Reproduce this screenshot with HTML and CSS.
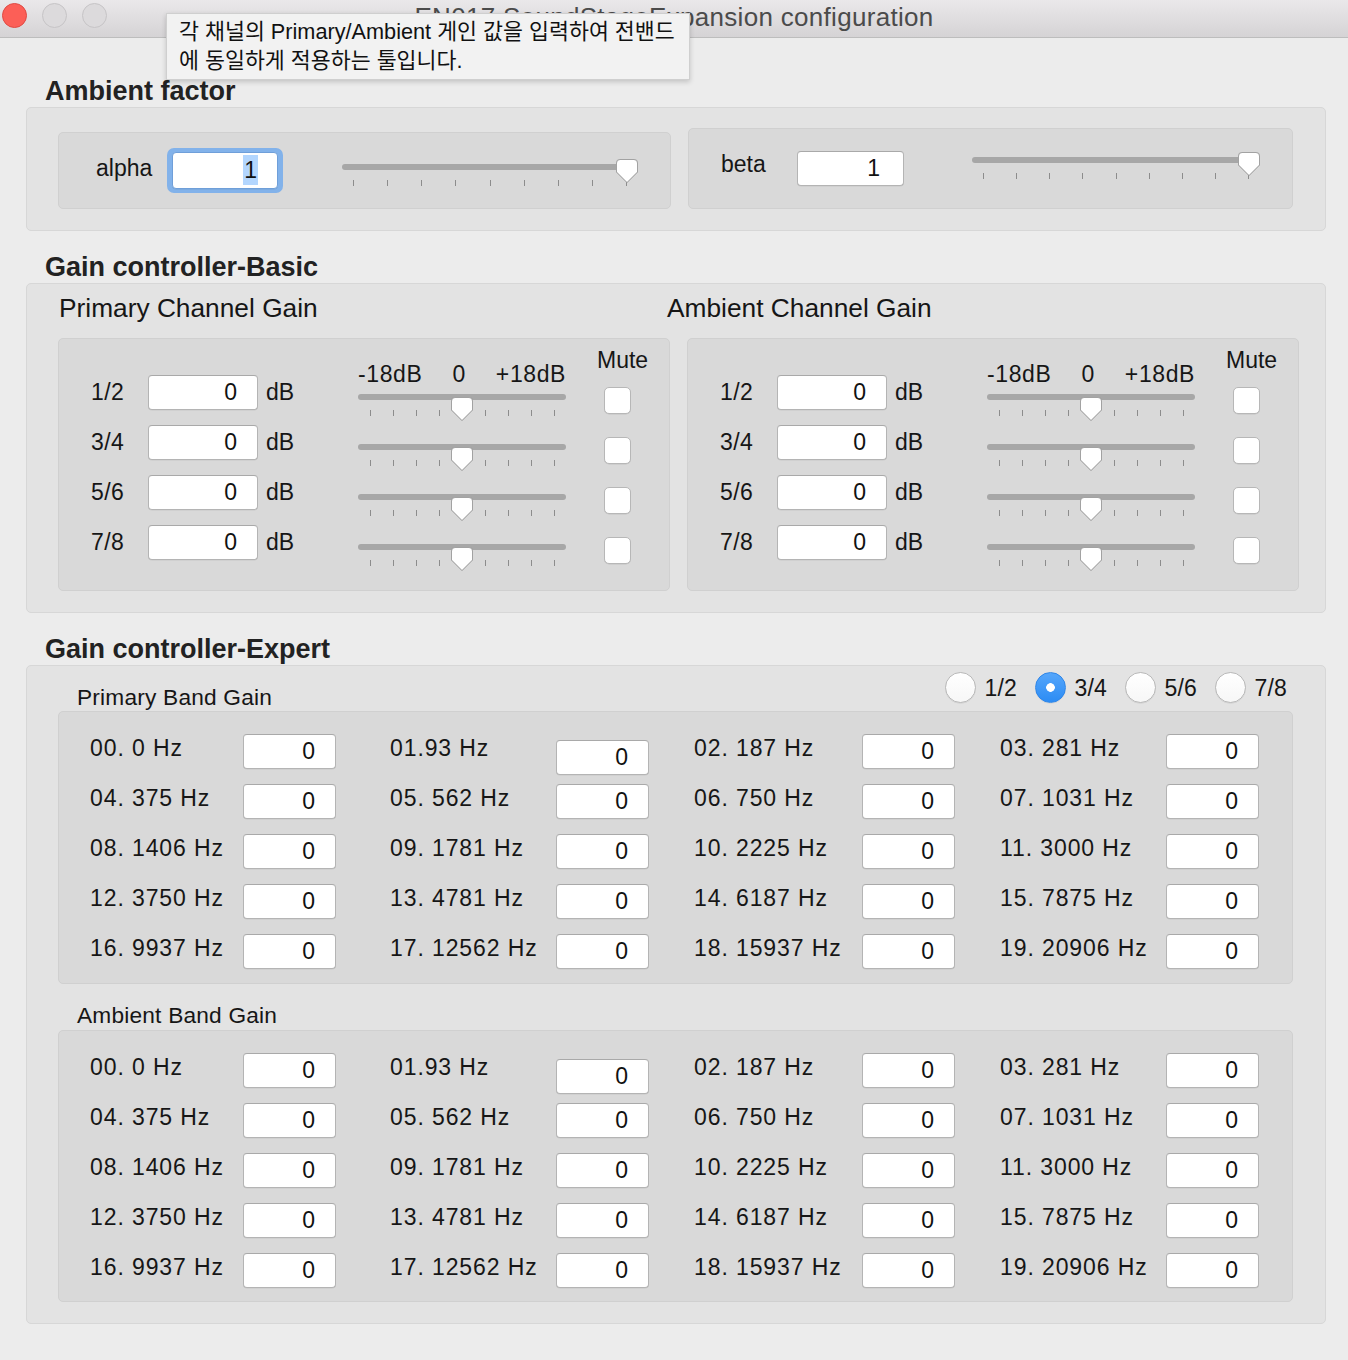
FILE: index.html
```html
<!DOCTYPE html>
<html lang="ko">
<head>
<meta charset="utf-8">
<title>EN017 SoundStageExpansion configuration</title>
<link rel="stylesheet" href="styles.css">
</head>
<body>
<div class="window">
  <header class="titlebar">
    <div class="lights">
      <span class="light close"></span>
      <span class="light"></span>
      <span class="light"></span>
    </div>
    <div class="title">EN017 SoundStageExpansion configuration</div>
    <div></div>
  </header>

  <main class="content">
    <h2 class="section-title">Ambient factor</h2>
    <section class="group group-factor">
      <div class="panel factor-panel alpha-panel">
        <span class="factor-label alpha-label">alpha</span>
        <div class="focus-ring"><div class="field field-alpha"><span class="sel">1</span></div></div>
        <div class="slider slider-alpha">
          <div class="track"></div>
          <div class="ticks"><i></i><i></i><i></i><i></i><i></i><i></i><i></i><i></i><i></i></div>
          <svg class="thumb" style="left:274px" width="22" height="24" viewBox="0 0 22 24"><path d="M4 0.5H18A3.5 3.5 0 0 1 21.5 4V13L11 23.5L0.5 13V4A3.5 3.5 0 0 1 4 0.5Z"/></svg>
        </div>
      </div>
      <div class="panel factor-panel beta-panel">
        <span class="factor-label beta-label">beta</span>
        <div class="field field-beta">1</div>
        <div class="slider slider-beta">
          <div class="track"></div>
          <div class="ticks"><i></i><i></i><i></i><i></i><i></i><i></i><i></i><i></i><i></i></div>
          <svg class="thumb" style="left:266px" width="22" height="24" viewBox="0 0 22 24"><path d="M4 0.5H18A3.5 3.5 0 0 1 21.5 4V13L11 23.5L0.5 13V4A3.5 3.5 0 0 1 4 0.5Z"/></svg>
        </div>
      </div>
    </section>

    <h2 class="section-title">Gain controller-Basic</h2>
    <section class="group group-basic">
      <div class="channel-heads">
        <span class="channel-title">Primary Channel Gain</span>
        <span class="channel-title">Ambient Channel Gain</span>
      </div>
      <div class="channel-panels">
        <div class="panel gain-panel">
          <div class="gain-rows">
            <div class="gain-row"><span class="ch">1/2</span><div class="field field-db">0</div><span class="unit">dB</span></div>
            <div class="gain-row"><span class="ch">3/4</span><div class="field field-db">0</div><span class="unit">dB</span></div>
            <div class="gain-row"><span class="ch">5/6</span><div class="field field-db">0</div><span class="unit">dB</span></div>
            <div class="gain-row"><span class="ch">7/8</span><div class="field field-db">0</div><span class="unit">dB</span></div>
          </div>
          <div class="gain-sliders">
            <div class="scale"><span>-18dB</span><span>0</span><span>+18dB</span></div>
            <div class="slider slider-gain"><div class="track"></div><div class="ticks"><i></i><i></i><i></i><i></i><i></i><i></i><i></i><i></i><i></i></div><svg class="thumb" style="left:93px" width="22" height="24" viewBox="0 0 22 24"><path d="M4 0.5H18A3.5 3.5 0 0 1 21.5 4V13L11 23.5L0.5 13V4A3.5 3.5 0 0 1 4 0.5Z"/></svg></div>
            <div class="slider slider-gain"><div class="track"></div><div class="ticks"><i></i><i></i><i></i><i></i><i></i><i></i><i></i><i></i><i></i></div><svg class="thumb" style="left:93px" width="22" height="24" viewBox="0 0 22 24"><path d="M4 0.5H18A3.5 3.5 0 0 1 21.5 4V13L11 23.5L0.5 13V4A3.5 3.5 0 0 1 4 0.5Z"/></svg></div>
            <div class="slider slider-gain"><div class="track"></div><div class="ticks"><i></i><i></i><i></i><i></i><i></i><i></i><i></i><i></i><i></i></div><svg class="thumb" style="left:93px" width="22" height="24" viewBox="0 0 22 24"><path d="M4 0.5H18A3.5 3.5 0 0 1 21.5 4V13L11 23.5L0.5 13V4A3.5 3.5 0 0 1 4 0.5Z"/></svg></div>
            <div class="slider slider-gain"><div class="track"></div><div class="ticks"><i></i><i></i><i></i><i></i><i></i><i></i><i></i><i></i><i></i></div><svg class="thumb" style="left:93px" width="22" height="24" viewBox="0 0 22 24"><path d="M4 0.5H18A3.5 3.5 0 0 1 21.5 4V13L11 23.5L0.5 13V4A3.5 3.5 0 0 1 4 0.5Z"/></svg></div>
          </div>
          <div class="mute-col">
            <div class="mute-label">Mute</div>
            <span class="checkbox"></span><span class="checkbox"></span><span class="checkbox"></span><span class="checkbox"></span>
          </div>
        </div>

        <div class="panel gain-panel">
          <div class="gain-rows">
            <div class="gain-row"><span class="ch">1/2</span><div class="field field-db">0</div><span class="unit">dB</span></div>
            <div class="gain-row"><span class="ch">3/4</span><div class="field field-db">0</div><span class="unit">dB</span></div>
            <div class="gain-row"><span class="ch">5/6</span><div class="field field-db">0</div><span class="unit">dB</span></div>
            <div class="gain-row"><span class="ch">7/8</span><div class="field field-db">0</div><span class="unit">dB</span></div>
          </div>
          <div class="gain-sliders">
            <div class="scale"><span>-18dB</span><span>0</span><span>+18dB</span></div>
            <div class="slider slider-gain"><div class="track"></div><div class="ticks"><i></i><i></i><i></i><i></i><i></i><i></i><i></i><i></i><i></i></div><svg class="thumb" style="left:93px" width="22" height="24" viewBox="0 0 22 24"><path d="M4 0.5H18A3.5 3.5 0 0 1 21.5 4V13L11 23.5L0.5 13V4A3.5 3.5 0 0 1 4 0.5Z"/></svg></div>
            <div class="slider slider-gain"><div class="track"></div><div class="ticks"><i></i><i></i><i></i><i></i><i></i><i></i><i></i><i></i><i></i></div><svg class="thumb" style="left:93px" width="22" height="24" viewBox="0 0 22 24"><path d="M4 0.5H18A3.5 3.5 0 0 1 21.5 4V13L11 23.5L0.5 13V4A3.5 3.5 0 0 1 4 0.5Z"/></svg></div>
            <div class="slider slider-gain"><div class="track"></div><div class="ticks"><i></i><i></i><i></i><i></i><i></i><i></i><i></i><i></i><i></i></div><svg class="thumb" style="left:93px" width="22" height="24" viewBox="0 0 22 24"><path d="M4 0.5H18A3.5 3.5 0 0 1 21.5 4V13L11 23.5L0.5 13V4A3.5 3.5 0 0 1 4 0.5Z"/></svg></div>
            <div class="slider slider-gain"><div class="track"></div><div class="ticks"><i></i><i></i><i></i><i></i><i></i><i></i><i></i><i></i><i></i></div><svg class="thumb" style="left:93px" width="22" height="24" viewBox="0 0 22 24"><path d="M4 0.5H18A3.5 3.5 0 0 1 21.5 4V13L11 23.5L0.5 13V4A3.5 3.5 0 0 1 4 0.5Z"/></svg></div>
          </div>
          <div class="mute-col">
            <div class="mute-label">Mute</div>
            <span class="checkbox"></span><span class="checkbox"></span><span class="checkbox"></span><span class="checkbox"></span>
          </div>
        </div>
      </div>
    </section>

    <h2 class="section-title">Gain controller-Expert</h2>
    <section class="group group-expert">
      <div class="expert-head">
        <span class="band-title">Primary Band Gain</span>
        <div class="radios">
          <label class="radio"><span class="radio-dot"></span>1/2</label>
          <label class="radio"><span class="radio-dot on"></span>3/4</label>
          <label class="radio"><span class="radio-dot"></span>5/6</label>
          <label class="radio"><span class="radio-dot"></span>7/8</label>
        </div>
      </div>
      <div class="panel band-panel">
        <div class="band-cell"><span class="band-label">00. 0 Hz</span><div class="field field-band">0</div></div>
        <div class="band-cell"><span class="band-label">01.93 Hz</span><div class="field field-band low">0</div></div>
        <div class="band-cell"><span class="band-label">02. 187 Hz</span><div class="field field-band">0</div></div>
        <div class="band-cell"><span class="band-label">03. 281 Hz</span><div class="field field-band">0</div></div>
        <div class="band-cell"><span class="band-label">04. 375 Hz</span><div class="field field-band">0</div></div>
        <div class="band-cell"><span class="band-label">05. 562 Hz</span><div class="field field-band">0</div></div>
        <div class="band-cell"><span class="band-label">06. 750 Hz</span><div class="field field-band">0</div></div>
        <div class="band-cell"><span class="band-label">07. 1031 Hz</span><div class="field field-band">0</div></div>
        <div class="band-cell"><span class="band-label">08. 1406 Hz</span><div class="field field-band">0</div></div>
        <div class="band-cell"><span class="band-label">09. 1781 Hz</span><div class="field field-band">0</div></div>
        <div class="band-cell"><span class="band-label">10. 2225 Hz</span><div class="field field-band">0</div></div>
        <div class="band-cell"><span class="band-label">11. 3000 Hz</span><div class="field field-band">0</div></div>
        <div class="band-cell"><span class="band-label">12. 3750 Hz</span><div class="field field-band">0</div></div>
        <div class="band-cell"><span class="band-label">13. 4781 Hz</span><div class="field field-band">0</div></div>
        <div class="band-cell"><span class="band-label">14. 6187 Hz</span><div class="field field-band">0</div></div>
        <div class="band-cell"><span class="band-label">15. 7875 Hz</span><div class="field field-band">0</div></div>
        <div class="band-cell"><span class="band-label">16. 9937 Hz</span><div class="field field-band">0</div></div>
        <div class="band-cell"><span class="band-label">17. 12562 Hz</span><div class="field field-band">0</div></div>
        <div class="band-cell"><span class="band-label">18. 15937 Hz</span><div class="field field-band">0</div></div>
        <div class="band-cell"><span class="band-label">19. 20906 Hz</span><div class="field field-band">0</div></div>
      </div>
      <div class="expert-head ambient-head">
        <span class="band-title">Ambient Band Gain</span>
      </div>
      <div class="panel band-panel">
        <div class="band-cell"><span class="band-label">00. 0 Hz</span><div class="field field-band">0</div></div>
        <div class="band-cell"><span class="band-label">01.93 Hz</span><div class="field field-band low">0</div></div>
        <div class="band-cell"><span class="band-label">02. 187 Hz</span><div class="field field-band">0</div></div>
        <div class="band-cell"><span class="band-label">03. 281 Hz</span><div class="field field-band">0</div></div>
        <div class="band-cell"><span class="band-label">04. 375 Hz</span><div class="field field-band">0</div></div>
        <div class="band-cell"><span class="band-label">05. 562 Hz</span><div class="field field-band">0</div></div>
        <div class="band-cell"><span class="band-label">06. 750 Hz</span><div class="field field-band">0</div></div>
        <div class="band-cell"><span class="band-label">07. 1031 Hz</span><div class="field field-band">0</div></div>
        <div class="band-cell"><span class="band-label">08. 1406 Hz</span><div class="field field-band">0</div></div>
        <div class="band-cell"><span class="band-label">09. 1781 Hz</span><div class="field field-band">0</div></div>
        <div class="band-cell"><span class="band-label">10. 2225 Hz</span><div class="field field-band">0</div></div>
        <div class="band-cell"><span class="band-label">11. 3000 Hz</span><div class="field field-band">0</div></div>
        <div class="band-cell"><span class="band-label">12. 3750 Hz</span><div class="field field-band">0</div></div>
        <div class="band-cell"><span class="band-label">13. 4781 Hz</span><div class="field field-band">0</div></div>
        <div class="band-cell"><span class="band-label">14. 6187 Hz</span><div class="field field-band">0</div></div>
        <div class="band-cell"><span class="band-label">15. 7875 Hz</span><div class="field field-band">0</div></div>
        <div class="band-cell"><span class="band-label">16. 9937 Hz</span><div class="field field-band">0</div></div>
        <div class="band-cell"><span class="band-label">17. 12562 Hz</span><div class="field field-band">0</div></div>
        <div class="band-cell"><span class="band-label">18. 15937 Hz</span><div class="field field-band">0</div></div>
        <div class="band-cell"><span class="band-label">19. 20906 Hz</span><div class="field field-band">0</div></div>
      </div>
    </section>
  </main>

  <div class="tooltip">각 채널의 Primary/Ambient 게인 값을 입력하여 전밴드<br>에 동일하게 적용하는 툴입니다.</div>
</div>
</body>
</html>
```

FILE: styles.css
```css
* { box-sizing: border-box; margin: 0; padding: 0; }

html, body { width: 1348px; height: 1360px; overflow: hidden; }

body {
  background: #ececec;
  font-family: "Liberation Sans", Arial, "Noto Sans CJK KR", sans-serif;
  font-size: 23px;
  color: #161616;
}

.window { position: relative; width: 1348px; height: 1360px; background: #ececec; }

/* ---------- title bar ---------- */
.titlebar {
  height: 38px;
  border-bottom: 1px solid #bdbdbd;
  background: linear-gradient(#eae8ea, #d5d3d5);
  display: grid;
  grid-template-columns: 1fr auto 1fr;
  align-items: start;
}
.lights { display: flex; gap: 15px; padding: 3px 0 0 2px; }
.light {
  width: 25px; height: 25px; border-radius: 50%;
  background: #dcdadc; border: 1px solid #c6c4c6;
}
.light.close { background: #fc5f57; border-color: #df4a43; }
.title {
  font-size: 26px; line-height: 30px; color: #4b4b4b;
  padding-top: 2px; letter-spacing: 0.3px;
}

/* ---------- content ---------- */
.content { padding: 0 22px 0 26px; }

.section-title {
  font-size: 27px; font-weight: bold; line-height: 30px; color: #222;
  margin: 21px 0 1px 19px;
}
.section-title:first-child { margin-top: 38px; }

.group {
  width: 1300px;
  background: #e3e3e3;
  border: 1px solid #d7d7d7;
  border-radius: 5px;
}

.panel {
  background: #d9d9d9;
  border: 1px solid #d0d0d0;
  border-radius: 5px;
}

.field {
  background: #fff;
  border: 1px solid #b4b4b4;
  border-top-color: #a9a9a9;
  border-radius: 4px;
  text-align: right;
  padding-right: 20px;
  font-size: 23px;
  color: #111;
  box-shadow: 0 0.5px 0.5px rgba(0,0,0,0.08);
}

/* ---------- slider ---------- */
.slider { position: relative; height: 30px; }
.slider .track {
  margin-top: 8px; height: 6px; border-radius: 3px; background: #a7a7a7;
}
.slider .ticks {
  display: flex; justify-content: space-between;
  margin-top: 10px; padding: 0 11px;
}
.slider .ticks i { display: block; width: 1px; height: 6px; background: #8c8c8c; }
.slider .thumb {
  position: absolute; top: 3px;
  filter: drop-shadow(0 0.5px 0.6px rgba(0,0,0,0.25));
}
.slider .thumb path { fill: #fff; stroke: #a2a2a2; stroke-width: 1; }

/* ---------- ambient factor ---------- */
.group-factor {
  display: flex; align-items: flex-end;
  padding: 20px 0 21px 31px;
}
.factor-panel { display: flex; align-items: flex-start; }
.alpha-panel { width: 613px; height: 77px; padding-left: 37px; }
.beta-panel { width: 605px; height: 81px; margin-left: 17px; padding-left: 32px; }
.factor-label { line-height: 24px; margin-top: 23px; }
.alpha-label { width: 71px; }
.beta-label { width: 76px; margin-top: 23px; }

.focus-ring {
  margin-top: 15px;
  width: 116px; height: 45px;
  border-radius: 7px;
  background: #82b2ea;
  padding: 4px 5px;
}
.field-alpha {
  height: 37px; line-height: 35px; border-color: #6f9fd9;
  padding-right: 19px;
}
.field-alpha .sel { background: #b3d6fe; padding: 2px 1px; }
.field-beta { width: 107px; height: 35px; line-height: 33px; margin-top: 22px; padding-right: 23px; }

.slider-alpha { width: 296px; margin: 23px 0 0 59px; }
.slider-beta { width: 288px; margin: 20px 0 0 68px; }

/* ---------- basic ---------- */
.group-basic { padding: 0 0 21px 31px; }
.channel-heads { display: flex; height: 54px; padding: 9px 0 0 1px; }
.channel-title { font-size: 26.3px; line-height: 30px; width: 608px; }
.channel-panels { display: flex; gap: 17px; }
.gain-panel { display: flex; width: 612px; height: 253px; }

.gain-rows { width: 299px; padding: 28px 0 0 32px; }
.gain-row { display: flex; align-items: center; height: 50px; }
.ch { width: 57px; line-height: 24px; letter-spacing: 0.4px; }
.field-db { width: 110px; height: 35px; line-height: 33px; padding-right: 20px; }
.unit { margin-left: 8px; line-height: 24px; }

.gain-sliders { width: 208px; padding-top: 23px; }
.scale { display: flex; justify-content: space-between; line-height: 24px; letter-spacing: 0.6px; height: 24px; }
.slider-gain { width: 208px; margin-bottom: 20px; }
.slider-gain .ticks { padding: 0 11px 0 12px; }

.mute-col { margin-left: 31px; padding-top: 9px; display: flex; flex-direction: column; align-items: flex-start; }
.mute-label { line-height: 24px; margin-bottom: 15px; }
.checkbox {
  display: block; width: 27px; height: 27px; margin: 0 0 23px 7px;
  background: #fff; border: 1px solid #b7b7b7; border-radius: 5px;
  box-shadow: 0 0.5px 0.5px rgba(0,0,0,0.1);
}

/* ---------- expert ---------- */
.group-expert { padding: 0 0 21px 31px; }
.expert-head {
  display: flex; justify-content: space-between; align-items: flex-start;
  height: 45px; width: 1235px;
}
.band-title { line-height: 24px; margin: 19px 0 0 19px; font-size: 22.7px; letter-spacing: 0.2px; }
.ambient-head { height: 46px; }

.radios { display: flex; margin: 6px 6px 0 0; }
.radio { display: flex; align-items: center; width: 90px; line-height: 30px; letter-spacing: 0.2px; }
.radio:last-child { width: auto; }
.radio-dot {
  width: 31px; height: 31px; border-radius: 50%;
  background: linear-gradient(#fff, #f7f7f7);
  border: 1px solid #b9b9b9;
  margin-right: 8px;
  box-shadow: 0 0.5px 0.5px rgba(0,0,0,0.1);
}
.radio-dot.on {
  background: radial-gradient(circle, #fff 0 4px, transparent 4.6px), linear-gradient(#55a6fb, #2c8cf4);
  border-color: #2f86e8;
}

.band-panel {
  width: 1235px;
  display: grid;
  grid-template-columns: 300px 304px 306px 1fr;
  grid-auto-rows: 50px;
  padding: 11px 0 0 31px;
  height: 273px;
}
.band-panel + .expert-head + .band-panel { height: 272px; }
.band-cell { display: flex; align-items: center; }
.band-label { width: 166px; line-height: 24px; letter-spacing: 0.9px; white-space: nowrap; }
.band-cell:nth-child(4n+1) .band-label { width: 153px; }
.band-cell:nth-child(4n+3) .band-label { width: 168px; }
.field-band { width: 93px; height: 35px; line-height: 33px; margin-top: 7px; padding-right: 20px; }
.field-band.low { margin-top: 19px; }

/* ---------- tooltip ---------- */
.tooltip {
  position: absolute; left: 166px; top: 13px;
  width: 524px; height: 67px;
  padding: 3px 0 0 12px;
  background: #f2f2f2;
  border: 1px solid #cfcfcf;
  box-shadow: 0 2px 5px rgba(0,0,0,0.18);
  font-family: "Liberation Sans", "Noto Sans CJK KR", sans-serif;
  font-size: 21.7px; line-height: 29px; color: #111;
}
```
